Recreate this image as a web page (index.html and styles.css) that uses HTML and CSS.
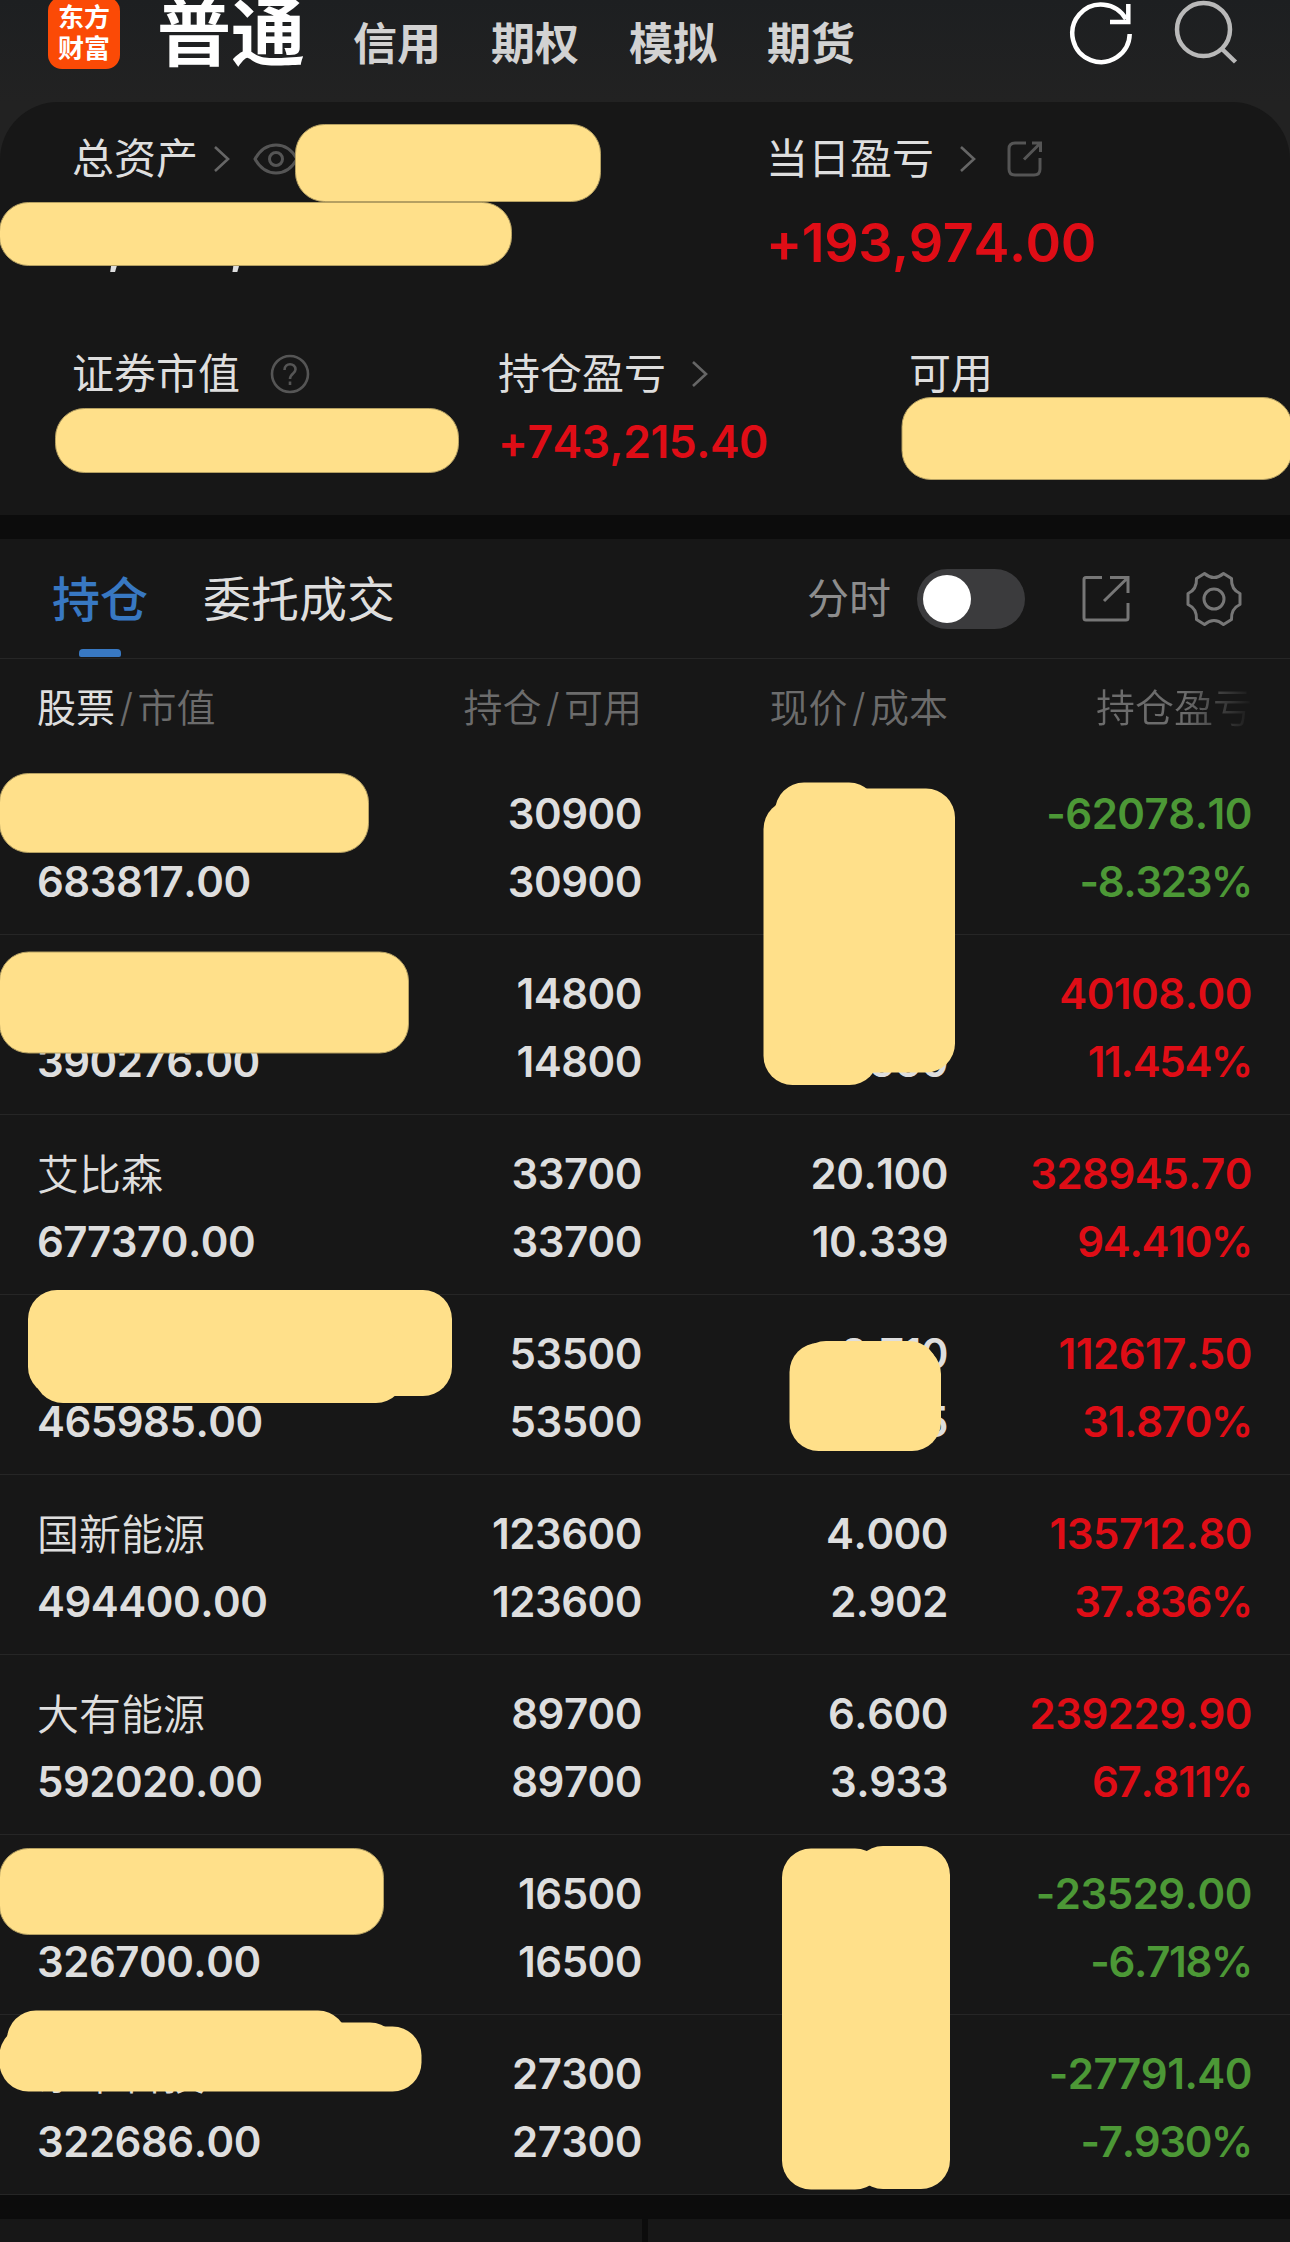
FILE: index.html
```html
<!DOCTYPE html>
<html lang="zh-CN">
<head>
    <meta charset="UTF-8">
    <meta name="viewport" content="width=device-width, initial-scale=1.0">
    <title>持仓</title>
    <link rel="stylesheet" href="styles.css">
</head>
<body>
    <div class="top">
        <header class="header">
            <div class="logo"><span>东方</span><span>财富</span></div>
            <h1>普通</h1>
            <nav class="accounts">
                <a>信用</a>
                <a>期权</a>
                <a>模拟</a>
                <a>期货</a>
            </nav>
            <div class="header-icons">
                <svg width="66" height="66" viewBox="0 0 66 66" fill="none" stroke="#fff" stroke-width="4.5">
                    <path d="M60.700 34A28.700 28.700 0 1 1 57 19.200"/>
                    <path d="M59.300 4V22H41"/>
                </svg>
                <svg width="66" height="66" viewBox="0 0 66 66" fill="none" stroke="#b9b9b9" stroke-width="4.5">
                    <circle cx="30.5" cy="29.5" r="26.5"/>
                    <path d="M49 49L62.5 62"/>
                </svg>
            </div>
        </header>
        <section class="assets">
            <div class="asset-row">
                <div class="asset total">
                    <div class="label">总资产
                        <svg class="chevron" width="18" height="28" viewBox="0 0 18 28"><path d="M2 2L15 14L2 26"/></svg>
                        <svg class="eye" width="46" height="34" viewBox="0 0 46 34" fill="none" stroke="#555" stroke-width="3">
                            <path d="M2 17C7 8 14 3 23 3S39 8 44 17C39 26 32 31 23 31S7 26 2 17Z"/>
                            <circle cx="23" cy="17" r="6.5"/>
                        </svg>
                    </div>
                    <div class="value big">0,000,000.00</div>
                </div>
                <div class="asset">
                    <div class="label">当日盈亏
                        <svg class="chevron wide" width="18" height="28" viewBox="0 0 18 28"><path d="M2 2L15 14L2 26"/></svg>
                        <svg class="share-small" width="36" height="36" viewBox="0 0 36 36" fill="none" stroke="#555" stroke-width="3">
                            <path d="M19 2H8Q2 2 2 8V28Q2 34 8 34H27Q33 34 33 28V17"/>
                            <path d="M25 2H33.5V11M33 2.5L17 18.5"/>
                        </svg>
                    </div>
                    <div class="value big red">+193,974.00</div>
                </div>
            </div>
            <div class="asset-row second">
                <div class="asset market">
                    <div class="label">证券市值
                        <svg class="help" width="40" height="40" viewBox="0 0 40 40" fill="none" stroke="#555" stroke-width="2.6">
                            <circle cx="20" cy="20" r="18"/>
                            <path d="M14.500 16C14.500 8.500 25.500 8.500 25.500 15.500C25.500 19.500 20 19.500 20 25"/>
                            <path d="M20 27.500V31"/>
                        </svg>
                    </div>
                </div>
                <div class="asset profit">
                    <div class="label">持仓盈亏
                        <svg class="chevron wide" width="18" height="28" viewBox="0 0 18 28"><path d="M2 2L15 14L2 26"/></svg>
                    </div>
                    <div class="value red">+743,215.40</div>
                </div>
                <div class="asset">
                    <div class="label">可用</div>
                </div>
            </div>
        </section>
    </div>

    <main class="positions">
        <div class="tabs">
            <div class="tab active">持仓</div>
            <div class="tab">委托成交</div>
            <div class="tools">
                <span>分时</span>
                <div class="switch"></div>
                <svg class="share" width="48" height="48" viewBox="0 0 48 48" fill="none" stroke="#777" stroke-width="3">
                    <path d="M20 2.500H4Q2 2.500 2 4.500V43Q2 45 4 45H44Q46 45 46 43V28"/>
                    <path d="M28 2.500H46V18M45 3.500L22 26"/>
                </svg>
                <svg width="56" height="56" viewBox="0 0 56 56" fill="none" stroke="#777" stroke-width="3" stroke-linejoin="round">
                    <path d="M18.500 2.500Q28 10.500 37.500 2.500L45.500 7.500Q45 18.500 54 22.500V33.500Q45 37.500 45.500 48.500L37.500 53.500Q28 45.500 18.500 53.500L10.500 48.500Q11 37.500 2 33.500V22.500Q11 18.500 10.500 7.500Z"/>
                    <circle cx="28" cy="28" r="10"/>
                </svg>
            </div>
        </div>
        <div class="row head">
            <div><b>股票</b><i>/</i>市值</div>
            <div>持仓<i>/</i>可用</div>
            <div>现价<i>/</i>成本</div>
            <div class="fade">持仓盈亏</div>
        </div>
        <div class="row">
            <div><p></p><p>683817.00</p></div>
            <div><p>30900</p><p>30900</p></div>
            <div></div>
            <div class="green"><p>-62078.10</p><p class="rate">-8.323%</p></div>
        </div>
        <div class="row">
            <div><p></p><p>390276.00</p></div>
            <div><p>14800</p><p>14800</p></div>
            <div><p></p><p>23.660</p></div>
            <div class="red"><p>40108.00</p><p class="rate">11.454%</p></div>
        </div>
        <div class="row">
            <div><p class="name">艾比森</p><p>677370.00</p></div>
            <div><p>33700</p><p>33700</p></div>
            <div><p>20.100</p><p>10.339</p></div>
            <div class="red"><p>328945.70</p><p class="rate">94.410%</p></div>
        </div>
        <div class="row">
            <div><p></p><p>465985.00</p></div>
            <div><p>53500</p><p>53500</p></div>
            <div><p>8.710</p><p>6.605</p></div>
            <div class="red"><p>112617.50</p><p class="rate">31.870%</p></div>
        </div>
        <div class="row">
            <div><p class="name">国新能源</p><p>494400.00</p></div>
            <div><p>123600</p><p>123600</p></div>
            <div><p>4.000</p><p>2.902</p></div>
            <div class="red"><p>135712.80</p><p class="rate">37.836%</p></div>
        </div>
        <div class="row">
            <div><p class="name">大有能源</p><p>592020.00</p></div>
            <div><p>89700</p><p>89700</p></div>
            <div><p>6.600</p><p>3.933</p></div>
            <div class="red"><p>239229.90</p><p class="rate">67.811%</p></div>
        </div>
        <div class="row">
            <div><p></p><p>326700.00</p></div>
            <div><p>16500</p><p>16500</p></div>
            <div></div>
            <div class="green"><p>-23529.00</p><p class="rate">-6.718%</p></div>
        </div>
        <div class="row">
            <div><p class="name">东华科技</p><p>322686.00</p></div>
            <div><p>27300</p><p>27300</p></div>
            <div></div>
            <div class="green"><p>-27791.40</p><p class="rate">-7.930%</p></div>
        </div>
    </main>

    <footer class="bottom">
        <div></div>
        <div></div>
    </footer>

    <!-- marker strokes that hide private values -->
    <svg class="masks" width="1290" height="2242" viewBox="0 0 1290 2242">
        <rect x="295.500" y="124.500" width="305" height="77" rx="29"/>
        <rect x="-.5" y="202.500" width="512" height="63" rx="29"/>
        <rect x="55.500" y="408.500" width="403" height="64" rx="29"/>
        <rect x="902" y="397.500" width="390" height="82" rx="29"/>

        <rect x="-.5" y="773.500" width="369" height="79" rx="29"/>
        <rect x="-.5" y="952" width="409" height="101" rx="29"/>
        <g class="joined">
            <rect x="775" y="782.500" width="103" height="120" rx="29"/>
            <rect x="763.500" y="800" width="115" height="285" rx="29"/>
            <rect x="830" y="788.500" width="125" height="284" rx="29"/>
        </g>
        <g class="joined">
            <rect x="28" y="1290" width="424" height="106" rx="29"/>
            <rect x="34" y="1330" width="371" height="73" rx="29"/>
        </g>
        <g class="joined">
            <rect x="789.500" y="1343" width="145" height="108" rx="29"/>
            <rect x="797" y="1341" width="141" height="96" rx="29"/>
            <rect x="800" y="1345" width="141" height="106" rx="29"/>
        </g>
        <rect x="-.5" y="1848.500" width="384" height="86" rx="29"/>
        <g class="joined">
            <rect x="782" y="1848.500" width="102" height="341" rx="29"/>
            <rect x="854" y="1846" width="96" height="343" rx="29"/>
        </g>
        <g class="joined">
            <rect x="7" y="2010.500" width="340" height="70" rx="29"/>
            <rect x="200" y="2022.500" width="199" height="68" rx="29"/>
            <rect x="-.5" y="2026.500" width="422" height="65" rx="29"/>
        </g>
    </svg>
</body>
</html>
```
FILE: styles.css
```css
:root {
    --bg: #0c0c0c;
    --panel: #171717;
    --line: #262626;
    --text: #dedede;
    --muted: #6c6c6c;
    --red: #df0d16;
    --green: #4c9836;
    --blue: #3878c2;
    --mask: #ffe08a;
}

* {
    box-sizing: border-box;
}

body {
    margin: 0;
    position: relative;
    width: 1290px;
    height: 2242px;
    overflow: hidden;
    background: var(--bg);
    color: var(--text);
    font-family: Inter, "Noto Sans CJK SC", sans-serif;
    font-size: 42px;
    font-kerning: none;
}

svg {
    flex: none;
}

p, h1 {
    margin: 0;
}

.red {
    color: var(--red);
}
.green {
    color: var(--green);
}

/* header */
.top {
    background: linear-gradient(#1d1f21, #222 102px);
    height: 515px;
}
.header {
    display: flex;
    height: 102px;
    padding: 0 51px 0 48px;
}
.logo {
    display: flex;
    flex-direction: column;
    align-items: center;
    justify-content: center;
    width: 72px;
    height: 72px;
    margin-top: -3px;
    border-radius: 14px;
    background: #fb4a06;
    color: #fff;
    font-size: 26px;
    font-weight: bold;
    line-height: 31px;
}
.header h1 {
    margin-left: 37px;
    color: #fff;
    font-size: 74px;
    line-height: 66px;
    font-weight: bold;
}
.accounts {
    display: flex;
    gap: 50px;
    margin-left: 48px;
    color: #d2d2d2;
    font-size: 44px;
    font-weight: 600;
    line-height: 88px;
}
.header-icons {
    display: flex;
    gap: 38px;
    margin-left: auto;
}

/* assets */
.assets {
    height: 413px;
    padding: 27px 0 0 72px;
    border-radius: 58px 58px 0 0;
    background: var(--panel);
}
.asset-row {
    display: flex;
}
.asset-row.second {
    margin-top: 71px;
}
.total {
    width: 694px;
}
.market {
    width: 426px;
}
.profit {
    width: 411px;
}
.label {
    display: flex;
    align-items: center;
    height: 60px;
    line-height: 60px;
}
.chevron {
    margin-left: 15px;
    fill: none;
    stroke: #666;
    stroke-width: 2.6;
}
.chevron.wide {
    margin-left: 25px;
}
.eye {
    margin-left: 22px;
}
.share-small {
    margin-left: 30px;
}
.help {
    margin-left: 30px;
}
.value {
    margin-top: 8px;
    font-size: 44.5px;
    font-weight: 600;
    line-height: 60px;
    letter-spacing: -0.5px;
}
.value.big {
    margin-top: 24px;
    font-size: 54px;
}

/* positions */
.positions {
    margin-top: 24px;
    background: var(--panel);
}
.tabs {
    display: flex;
    height: 120px;
    padding: 0 48px 0 52px;
    border-bottom: 1px solid var(--line);
    font-size: 48px;
    line-height: 121px;
}
.tab {
    position: relative;
    margin-right: 55px;
}
.tab.active {
    color: var(--blue);
    font-weight: 500;
}
.tab.active::after {
    content: "";
    position: absolute;
    left: 27px;
    bottom: 1px;
    width: 42px;
    height: 8px;
    border-radius: 4px 4px 2px 2px;
    background: var(--blue);
}
.tools {
    display: flex;
    align-items: center;
    margin-left: auto;
    color: #8d8d8d;
    font-size: 42px;
}
.switch {
    width: 108px;
    height: 60px;
    margin-left: 26px;
    padding: 6px;
    border-radius: 30px;
    background: #3b3b3d;
}
.switch::before {
    content: "";
    display: block;
    width: 48px;
    height: 48px;
    border-radius: 50%;
    background: #fff;
}
.share {
    margin: 0 56px 0 57px;
}

.row {
    display: grid;
    grid-template-columns: 235px 370px 306px 304px;
    height: 180px;
    padding: 25px 38px 0 37px;
    border-bottom: 1px solid var(--line);
    font-weight: 560;
    line-height: 68px;
    letter-spacing: -0.5px;
    text-align: right;
}
.row > :first-child {
    text-align: left;
}
.row p {
    height: 68px;
}
.row .name {
    font-weight: 350;
    line-height: 70px;
    letter-spacing: 0;
}
.row .rate {
    letter-spacing: -1.3px;
}
.row.head {
    height: 96px;
    padding-top: 0;
    border: 0;
    color: var(--muted);
    font-size: 39px;
    font-weight: 350;
    line-height: 97px;
    letter-spacing: 0;
}
.head b {
    color: var(--text);
    font-weight: 400;
}
.head i {
    padding: 0 4.5px;
    font-style: normal;
}
.head .fade {
    background: linear-gradient(90deg, var(--muted) 78%, #1c1c1c 99%);
    background-clip: text;
    -webkit-background-clip: text;
    color: transparent;
}

.bottom {
    display: flex;
    gap: 6px;
    height: 24px;
    margin-top: 24px;
}
.bottom div {
    flex: 1;
    background: var(--panel);
}

.masks {
    position: absolute;
    top: 0;
    left: 0;
    fill: var(--mask);
    stroke: #b5a062;
    stroke-width: 1;
}
.masks .joined {
    stroke: none;
}
```
